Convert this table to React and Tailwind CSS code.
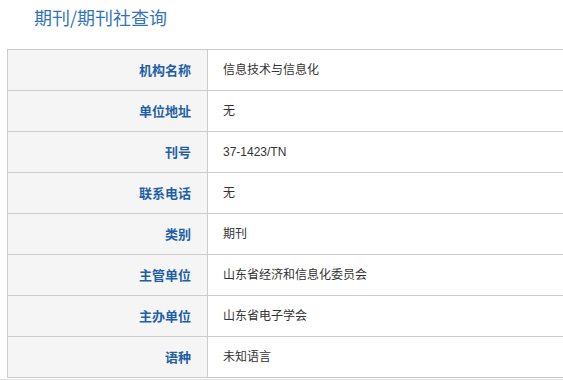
const ROWS = [
  ['机构名称', '信息技术与信息化'],
  ['单位地址', '无'],
  ['刊号', '37-1423/TN'],
  ['联系电话', '无'],
  ['类别', '期刊'],
  ['主管单位', '山东省经济和信息化委员会'],
  ['主办单位', '山东省电子学会'],
  ['语种', '未知语言'],
]

export default function App() {
  return (
    <div className="h-[380px] w-[563px] overflow-hidden bg-white font-['Noto_Sans_CJK_SC',sans-serif]">
      <h2 className="pl-[34px] pt-[5px] h-[49px] text-[18px] leading-[24px] font-normal text-[#3274ba] font-['Noto_Sans_CJK_SC',sans-serif]">
        期刊/期刊社查询
      </h2>
      <div className="ml-[7px] w-[600px] border-l border-t border-[#cccccc]">
        {ROWS.map(([label, value]) => (
          <div key={label} className="flex h-[41px] border-b border-[#cccccc]">
            <div className="w-[200px] shrink-0 bg-[#f5f5f5] border-r border-[#cccccc] flex items-center justify-end pr-[16px] text-[13px] font-bold text-[#1f5fa6]">
              {label}
            </div>
            <div className="flex items-center pl-[15px] text-[12px] text-[#333333] font-['Liberation_Sans','Noto_Sans_CJK_SC',sans-serif]">
              {value}
            </div>
          </div>
        ))}
      </div>
      <div className="h-[2px] mt-px bg-[#e4e4e4]" />
    </div>
  )
}
